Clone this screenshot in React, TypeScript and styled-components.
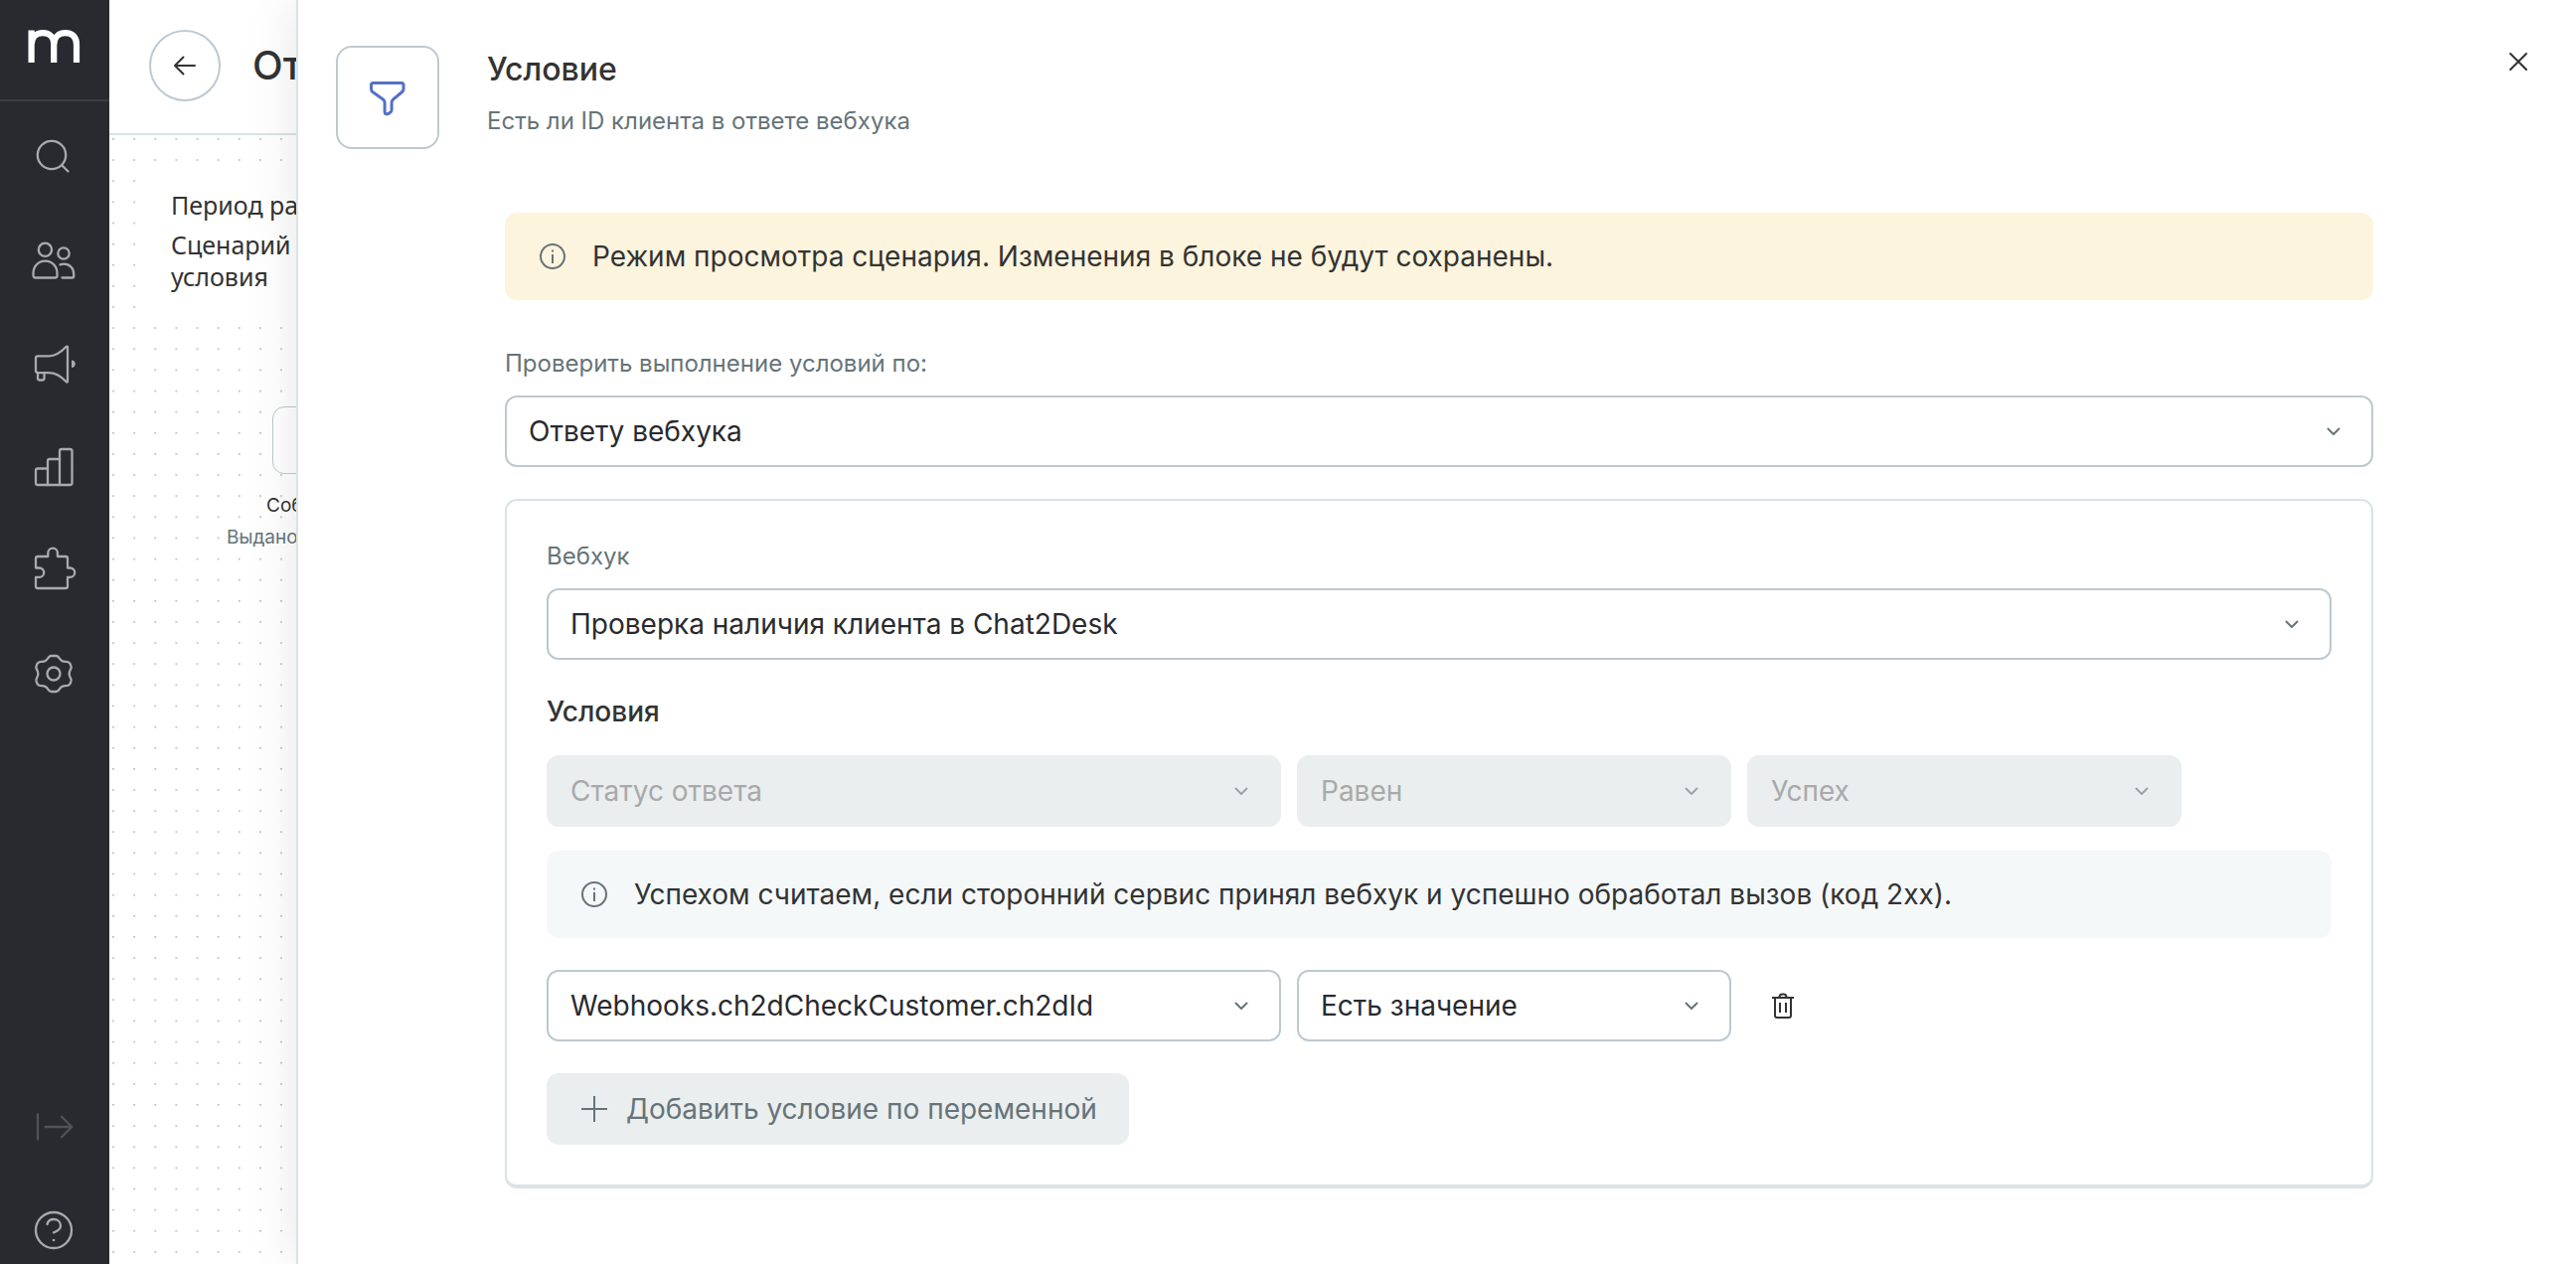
import React, { useId } from "react";
import styled, { createGlobalStyle } from "styled-components";

const color = {
  ink: "#292a2f",
  text: "#333333",
  muted: "#667479",
  border: "#bdc9d1",
  line: "#dbe3e6",
  disabled: "#eaeeef",
  disabledText: "#a9a9a9",
  sidebarIcon: "#a9aaac",
  accent: "#5470c6",
};

const GlobalStyle = createGlobalStyle`
  *, *::before, *::after { box-sizing: border-box; }
  html, body, #root { height: 100%; }
  body {
    margin: 0;
    overflow: hidden;
    background: #fff;
    color: ${color.text};
    font-family: Inter, "Liberation Sans", sans-serif;
    font-size: 28px;
    line-height: 40px;
  }
  button, select { font: inherit; color: inherit; }
  h1, h2, h3, p { margin: 0; }
  svg { display: block; flex: none; }
`;

const Shell = styled.div`
  position: relative;
  display: flex;
  height: 100vh;
`;

/* ---------- Sidebar ---------- */

const Sidebar = styled.aside`
  display: flex;
  flex-direction: column;
  flex: none;
  width: 110px;
  background: ${color.ink};
`;

const LogoLink = styled.a`
  display: flex;
  justify-content: center;
  height: 102px;
  padding-top: 24px;
  border-bottom: 2px solid #3d3e43;
`;

const Nav = styled.nav`
  display: flex;
  flex: 1;
  flex-direction: column;
  align-items: center;
  gap: 56px;
  padding: 32px 0 10px;
`;

const NavButton = styled.button<{ $dim?: boolean; $pushed?: boolean }>`
  width: 48px;
  height: 48px;
  padding: 0;
  border: 0;
  background: none;
  color: ${(p) => (p.$dim ? "#515257" : color.sidebarIcon)};
  margin-top: ${(p) => (p.$pushed ? "auto" : "0")};
  cursor: pointer;
`;

/* ---------- Scenario page behind the panel ---------- */

const Page = styled.main`
  display: flex;
  flex: 1;
  flex-direction: column;
  min-width: 0;
`;

const PageHeader = styled.header`
  display: flex;
  align-items: center;
  gap: 32px;
  height: 136px;
  padding: 0 40px 2px;
  border-bottom: 2px solid ${color.line};
`;

const BackButton = styled.button`
  display: grid;
  place-items: center;
  width: 72px;
  height: 72px;
  padding: 0;
  border: 2px solid ${color.border};
  border-radius: 50%;
  background: #fff;
  cursor: pointer;
`;

const PageTitle = styled.h1`
  font-size: 40px;
  line-height: 48px;
  font-weight: 500;
`;

const Canvas = styled.section`
  position: relative;
  flex: 1;
  overflow: hidden;
`;

const DotGrid = styled.svg`
  width: 100%;
  height: 100%;
`;

const Note = styled.div`
  position: absolute;
  left: 42px;
  top: 34px;
  width: 200px;
  padding: 20px;
  background: #fff;
  font-family: "Noto Sans", sans-serif;
  font-size: 25px;
  line-height: 32px;
`;

const NoteLine = styled.p`
  & + & { margin-top: 8px; }
`;

const Node = styled.div`
  position: absolute;
  left: 118px;
  top: 273px;
  width: 140px;
  display: grid;
  justify-items: start;
  font-size: 19px;
  line-height: 32px;
`;

const NodeBox = styled.div`
  width: 68px;
  height: 68px;
  margin: 0 0 16px 46px;
  border: 1px solid ${color.border};
  border-radius: 12px;
  background: #fff;
`;

const NodeTitle = styled.p`
  padding-left: 40px;
`;

const NodeCaption = styled.p`
  color: ${color.muted};
`;

/* ---------- Condition panel ---------- */

const Panel = styled.section`
  position: absolute;
  inset: 0 0 0 298px;
  border-left: 2px solid ${color.line};
  background: #fff;
  box-shadow: 0 0 48px rgba(0, 0, 0, 0.1);
`;

const PanelHeader = styled.header`
  display: flex;
  align-items: flex-start;
  gap: 48px;
  padding: 38px 34px 0 38px;
`;

const BlockIcon = styled.div`
  display: grid;
  place-items: center;
  width: 104px;
  height: 104px;
  margin-top: 8px;
  border: 2px solid ${color.border};
  border-radius: 16px;
`;

const Titles = styled.div`
  display: grid;
  flex: 1;
  gap: 16px;
  padding-top: 12px;
`;

const PanelTitle = styled.h2`
  font-size: 32px;
  line-height: 40px;
  font-weight: 500;
`;

const PanelSubtitle = styled.p`
  color: ${color.muted};
  font-size: 24px;
  line-height: 32px;
`;

const IconButton = styled.button<{ $size: number }>`
  display: grid;
  place-items: center;
  width: ${(p) => p.$size}px;
  height: ${(p) => p.$size}px;
  padding: 0;
  border: 0;
  background: none;
  color: ${color.text};
  cursor: pointer;
`;

const PanelBody = styled.form`
  padding: 64px 204px 64px 208px;
`;

const Notice = styled.div<{ $tone: "warning" | "info" }>`
  display: flex;
  align-items: center;
  gap: 24px;
  padding: 24px 32px;
  border-radius: 12px;
  background: ${(p) => (p.$tone === "warning" ? "#fdf4dd" : "#f4f8f9")};
`;

const Field = styled.div`
  display: grid;
  gap: 16px;
`;

const TopField = styled(Field)`
  margin: 48px 0 32px;
`;

const Label = styled.label`
  color: ${color.muted};
  font-size: 24px;
  line-height: 32px;
`;

const SelectBox = styled.div<{ $span?: number }>`
  display: grid;
  align-items: center;
  grid-column: ${(p) => (p.$span ? `span ${p.$span}` : "auto")};
  & > * { grid-area: 1 / 1; }
`;

const SelectInput = styled.select`
  appearance: none;
  width: 100%;
  height: 72px;
  padding: 0 72px 0 22px;
  border: 2px solid ${color.border};
  border-radius: 12px;
  background: #fff;
  color: ${color.ink};
  text-overflow: ellipsis;

  &:disabled {
    border-color: ${color.disabled};
    background: ${color.disabled};
    color: ${color.disabledText};
    opacity: 1;
  }
`;

const Chevron = styled.svg<{ $off?: boolean }>`
  justify-self: end;
  margin-right: 32px;
  color: ${(p) => (p.$off ? "#9ba4a7" : color.muted)};
  pointer-events: none;
`;

const Card = styled.div`
  padding: 40px;
  border: 2px solid ${color.line};
  border-bottom-width: 4px;
  border-radius: 12px;
`;

const CardTitle = styled.h3`
  margin: 32px 0 24px;
  font-size: 28px;
  line-height: 40px;
  font-weight: 500;
`;

const ConditionRow = styled.div<{ $gap: number }>`
  display: grid;
  grid-template-columns: repeat(12, 1fr);
  gap: 16px;
  margin-bottom: ${(p) => p.$gap}px;
`;

const InfoRow = styled.div`
  margin-bottom: 32px;
`;

const AddButton = styled.button`
  display: flex;
  align-items: center;
  gap: 16px;
  height: 72px;
  padding: 0 32px;
  border: 0;
  border-radius: 12px;
  background: ${color.disabled};
  color: ${color.muted};
`;

/* ---------- Icons ---------- */

const stroke = {
  fill: "none",
  stroke: "currentColor",
  strokeWidth: 2,
  strokeLinecap: "round",
  strokeLinejoin: "round",
} as const;

const NavIcon = ({ children }: { children: React.ReactNode }) => (
  <svg width="48" height="48" viewBox="0 0 48 48" {...stroke} strokeWidth="2.3" aria-hidden="true">
    {children}
  </svg>
);

const Logo = () => (
  <svg width="56" height="44" viewBox="0 0 56 44" fill="none" stroke="#fff" strokeWidth="6.2" aria-hidden="true">
    <path d="M4.6 39V6.4M4.6 21.500C4.600 13.500 9.500 9.100 16.200 9.100C23 9.100 27.200 13.300 27.200 20.500V39M27.200 21.500C27.200 13.500 32 9.100 38.700 9.100C46 9.100 50 13.300 50 20.800V39" />
  </svg>
);

const InfoIcon = () => (
  <svg width="32" height="32" viewBox="0 0 32 32" fill="none" stroke={color.muted} strokeWidth="2" aria-hidden="true">
    <circle cx="16" cy="16" r="12" />
    <path d="M16 14v9M16 9.500v2" />
  </svg>
);

/* ---------- Parts ---------- */

type SelectProps = { value: string; label?: string; id?: string; span?: number; disabled?: boolean };

const Select = ({ value, label, id, span, disabled }: SelectProps) => (
  <SelectBox $span={span}>
    <SelectInput id={id} aria-label={label} disabled={disabled} defaultValue={value}>
      <option>{value}</option>
    </SelectInput>
    <Chevron $off={disabled} width="16" height="16" viewBox="0 0 16 16" {...stroke}>
      <path d="M2.500 5.500L8 11l5.500-5.500" />
    </Chevron>
  </SelectBox>
);

const navItems: { label: string; icon: React.ReactNode; dim?: boolean; pushed?: boolean }[] = [
  {
    label: "Поиск",
    icon: (
      <>
        <circle cx="21" cy="22" r="14.200" />
        <path d="M31.500 32.500l6 6" />
      </>
    ),
  },
  {
    label: "Клиенты",
    icon: (
      <>
        <circle cx="14.400" cy="13.300" r="6.600" />
        <circle cx="33" cy="17" r="5.700" />
        <path d="M2.500 39.500V37c0-7 5-12.300 12-12.300S26.500 30 26.500 37v2.500a2 2 0 0 1-2 2h-20a2 2 0 0 1-2-2z" />
        <path d="M29.500 28.400c1.300-.600 2.600-.800 4-.800 5.500 0 9.700 4.400 9.700 9.900v2.500a1.500 1.500 0 0 1-1.500 1.500H31.500" />
      </>
    ),
  },
  {
    label: "Кампании",
    icon: (
      <>
        <path d="M18 16.300c6.500 0 13-4.500 17.500-9.300q1.500-1.200 1.500 .800v33.500q0 2-1.500 .800c-4.500-5-11-9-17.500-9H7a2 2 0 0 1-2-2V18.300a2 2 0 0 1 2-2z" />
        <path d="M7 33v5.500a2 2 0 0 0 2 2h2.500a2 2 0 0 0 2-2V33" />
        <path d="M41 20.500c5 0 5 7.500 0 7.500z" fill="currentColor" stroke="none" />
      </>
    ),
  },
  {
    label: "Отчеты",
    icon: (
      <>
        <path d="M17 25.500H7a2 2 0 0 0-2 2V40a2 2 0 0 0 2 2h32.500a2 2 0 0 0 2-2V8a2 2 0 0 0-2-2H31a2 2 0 0 0-2 2v34" />
        <path d="M17 42V18a2 2 0 0 1 2-2h10" />
      </>
    ),
  },
  {
    label: "Интеграции",
    icon: (
      <>
        <path d="M7 10h10.300V6.500a4.800 4.800 0 0 1 9.600 0V10H35a2 2 0 0 1 2 2v9.500h2.500a4.700 4.700 0 0 1 0 9.400H37V40a2 2 0 0 1-2 2H7a2 2 0 0 1-2-2v-9.100h3.500a4.700 4.700 0 0 0 0-9.400H5V12a2 2 0 0 1 2-2z" />
      </>
    ),
  },
  {
    label: "Настройки",
    icon: (
      <>
        <circle cx="23" cy="24" r="6.500" />
        <path d="M20.300 6h5.400c1.500 0 2.200 1 3 2.300 1.600 2.800 3.600 3.800 6.600 3.600 2 0 3 .200 4 1.700l1 2.200c.800 1.500 .500 2.500-.300 3.800-1.800 3-1.800 5.800 0 8.800 .800 1.300 1.100 2.300 .300 3.800l-1 2.200c-1 1.500-2 1.700-4 1.700-3-.200-5 .800-6.600 3.600-.800 1.300-1.500 2.300-3 2.300h-5.400c-1.500 0-2.200-1-3-2.300-1.600-2.800-3.600-3.800-6.600-3.600-2 0-3-.200-4-1.700l-1-2.200c-.800-1.500-.500-2.500 .300-3.800 1.800-3 1.800-5.800 0-8.800-.800-1.300-1.100-2.300-.300-3.800l1-2.200c1-1.500 2-1.700 4-1.700 3 .200 5-.800 6.600-3.600 .800-1.300 1.500-2.300 3-2.300z" />
      </>
    ),
  },
  {
    label: "Развернуть меню",
    dim: true,
    pushed: true,
    icon: <path d="M7 11.500v25M14.500 24H41M31 13.700L41.300 24 31 34.300" />,
  },
  {
    label: "Помощь",
    icon: (
      <>
        <circle cx="23" cy="24" r="18" />
        <path d="M16.500 18c.700-3 3.300-5 6.500-5 4 0 7 2.700 7 6.500 0 4-3.500 5.500-7 6.800" />
        <circle cx="23" cy="34" r="1.300" fill="currentColor" stroke="none" />
      </>
    ),
  },
];

export default function App() {
  const sourceId = useId();
  const webhookId = useId();

  return (
    <>
      <GlobalStyle />
      <Shell>
        <Sidebar>
          <LogoLink href="#" aria-label="Главная">
            <Logo />
          </LogoLink>
          <Nav>
            {navItems.map((item) => (
              <NavButton key={item.label} type="button" aria-label={item.label} $dim={item.dim} $pushed={item.pushed}>
                <NavIcon>{item.icon}</NavIcon>
              </NavButton>
            ))}
          </Nav>
        </Sidebar>

        <Page>
          <PageHeader>
            <BackButton type="button" aria-label="Назад">
              <svg width="24" height="24" viewBox="0 0 24 24" {...stroke}>
                <path d="M22 12H2M10.500 3.500L2 12l8.500 8.500" />
              </svg>
            </BackButton>
            <PageTitle>От</PageTitle>
          </PageHeader>
          <Canvas>
            <DotGrid aria-hidden="true">
              <defs>
                <pattern id="dots" x="-6.500" y="-6.500" width="21.130" height="21.130" patternUnits="userSpaceOnUse">
                  <circle cx="10.500" cy="10.500" r="0.800" fill="#999999" />
                </pattern>
              </defs>
              <rect width="100%" height="100%" fill="url(#dots)" />
            </DotGrid>
            <Note>
              <NoteLine>Период ра</NoteLine>
              <NoteLine>
                Сценарий
                <br />
                условия
              </NoteLine>
            </Note>
            <Node>
              <NodeBox />
              <NodeTitle>Соб</NodeTitle>
              <NodeCaption>Выдано</NodeCaption>
            </Node>
          </Canvas>
        </Page>

        <Panel>
          <PanelHeader>
            <BlockIcon>
              <svg width="40" height="40" viewBox="0 0 40 40" {...stroke} stroke={color.accent} strokeWidth="3">
                <path d="M5.500 5.500h28.500q2 0 2 2V11.500q0 1.800-1.400 3L25.500 22.200q-1.400 1.300-1.400 3V32.500q0 1.500-1.200 2.400l-2.200 1.500q-3.400 1.400-3.600-2V25.200q0-1.700-1.400-3L4.900 14.500Q3.500 13.300 3.500 11.500V7.500q0-2 2-2z" />
              </svg>
            </BlockIcon>
            <Titles>
              <PanelTitle>Условие</PanelTitle>
              <PanelSubtitle>Есть ли ID клиента в ответе вебхука</PanelSubtitle>
            </Titles>
            <IconButton type="button" aria-label="Закрыть" $size={48}>
              <svg width="24" height="24" viewBox="0 0 24 24" {...stroke}>
                <path d="M4 4l16 16M20 4L4 20" />
              </svg>
            </IconButton>
          </PanelHeader>

          <PanelBody>
            <Notice $tone="warning">
              <InfoIcon />
              <p>Режим просмотра сценария. Изменения в блоке не будут сохранены.</p>
            </Notice>

            <TopField>
              <Label htmlFor={sourceId}>Проверить выполнение условий по:</Label>
              <Select id={sourceId} value="Ответу вебхука" />
            </TopField>

            <Card>
              <Field>
                <Label htmlFor={webhookId}>Вебхук</Label>
                <Select id={webhookId} value="Проверка наличия клиента в Chat2Desk" />
              </Field>

              <CardTitle>Условия</CardTitle>
              <ConditionRow $gap={24}>
                <Select label="Параметр" value="Статус ответа" span={5} disabled />
                <Select label="Оператор" value="Равен" span={3} disabled />
                <Select label="Значение" value="Успех" span={3} disabled />
              </ConditionRow>

              <InfoRow>
                <Notice $tone="info">
                  <InfoIcon />
                  <p>Успехом считаем, если сторонний сервис принял вебхук и успешно обработал вызов (код 2xx).</p>
                </Notice>
              </InfoRow>

              <ConditionRow $gap={32}>
                <Select label="Переменная" value="Webhooks.ch2dCheckCustomer.ch2dId" span={5} />
                <Select label="Проверка" value="Есть значение" span={3} />
                <IconButton type="button" aria-label="Удалить условие" $size={72}>
                  <svg width="32" height="32" viewBox="0 0 32 32" {...stroke} strokeLinecap="butt" strokeLinejoin="miter">
                    <path d="M5 8h22M8 8V26a2 2 0 0 0 2 2h12a2 2 0 0 0 2-2V8M12.500 7.500a3 3 0 0 1 3-3h1a3 3 0 0 1 3 3M13 13v10M19 13v10" />
                  </svg>
                </IconButton>
              </ConditionRow>

              <AddButton type="button">
                <svg width="32" height="32" viewBox="0 0 32 32" fill="none" stroke="currentColor" strokeWidth="2" aria-hidden="true">
                  <path d="M16 3v26M3 16h26" />
                </svg>
                Добавить условие по переменной
              </AddButton>
            </Card>
          </PanelBody>
        </Panel>
      </Shell>
    </>
  );
}
